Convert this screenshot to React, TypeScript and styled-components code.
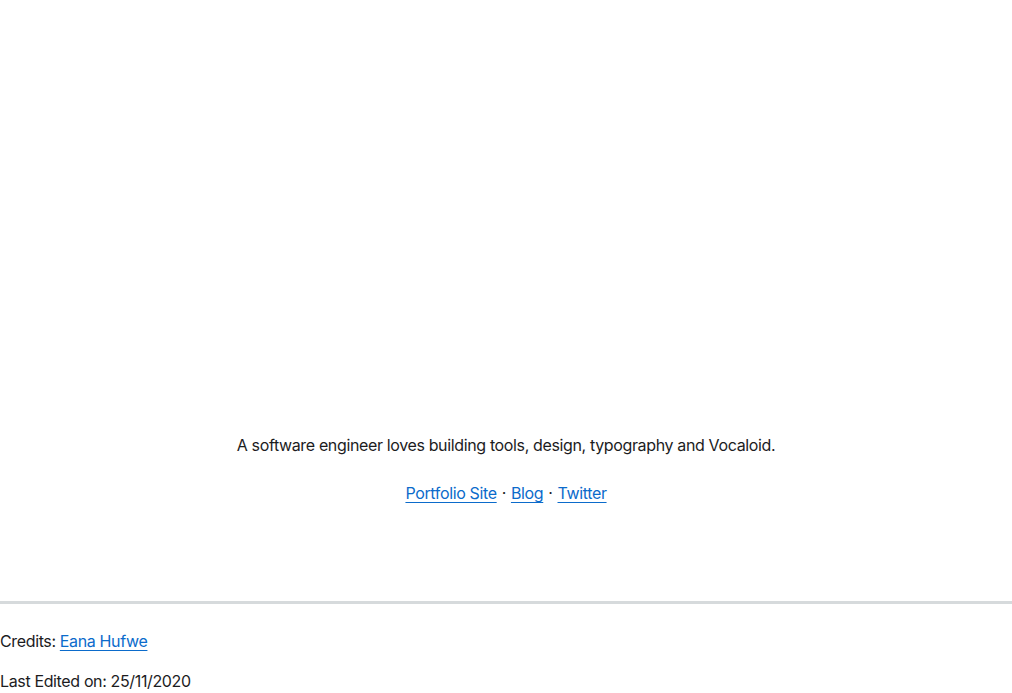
import React from "react";
import styled, { createGlobalStyle } from "styled-components";

const Global = createGlobalStyle`
  html, body { margin: 0; padding: 0; background: #ffffff; }
  body {
    font-family: Inter, "Noto Sans", "Liberation Sans", sans-serif;
    font-size: 16px;
    line-height: 24px;
    color: #1c1c1e;
  }
`;

const Page = styled.div`
  display: flex;
  flex-direction: column;
  min-height: 693px;
`;

const Hero = styled.section`
  display: flex;
  flex-direction: column;
  align-items: center;
  gap: 24px;
  padding-top: 433px;
  padding-bottom: 96px;
`;

const Line = styled.p`
  margin: 0;
  text-align: center;
  letter-spacing: -0.36px;
`;

const Link = styled.a`
  color: #0b6bcb;
  text-decoration: underline;
  text-underline-offset: 3px;
  text-decoration-thickness: 1px;
`;

const Sep = styled.span`
  margin: 0 5px;
`;

const Rule = styled.hr`
  margin: 0;
  border: none;
  height: 3px;
  background: #d6dadc;
  width: 100%;
`;

const Footer = styled.footer`
  display: flex;
  flex-direction: column;
  gap: 16px;
  padding-top: 25px;
`;

const FootLine = styled.p`
  margin: 0;
  letter-spacing: -0.36px;
`;

export default function App() {
  return (
    <Page>
      <Global />
      <Hero>
        <Line>A software engineer loves building tools, design, typography and Vocaloid.</Line>
        <Line>
          <Link href="#">Portfolio Site</Link>
          <Sep>·</Sep>
          <Link href="#">Blog</Link>
          <Sep>·</Sep>
          <Link href="#">Twitter</Link>
        </Line>
      </Hero>
      <Rule />
      <Footer>
        <FootLine>
          Credits: <Link href="#">Eana Hufwe</Link>
        </FootLine>
        <FootLine>Last Edited on: 25/11/2020</FootLine>
      </Footer>
    </Page>
  );
}
